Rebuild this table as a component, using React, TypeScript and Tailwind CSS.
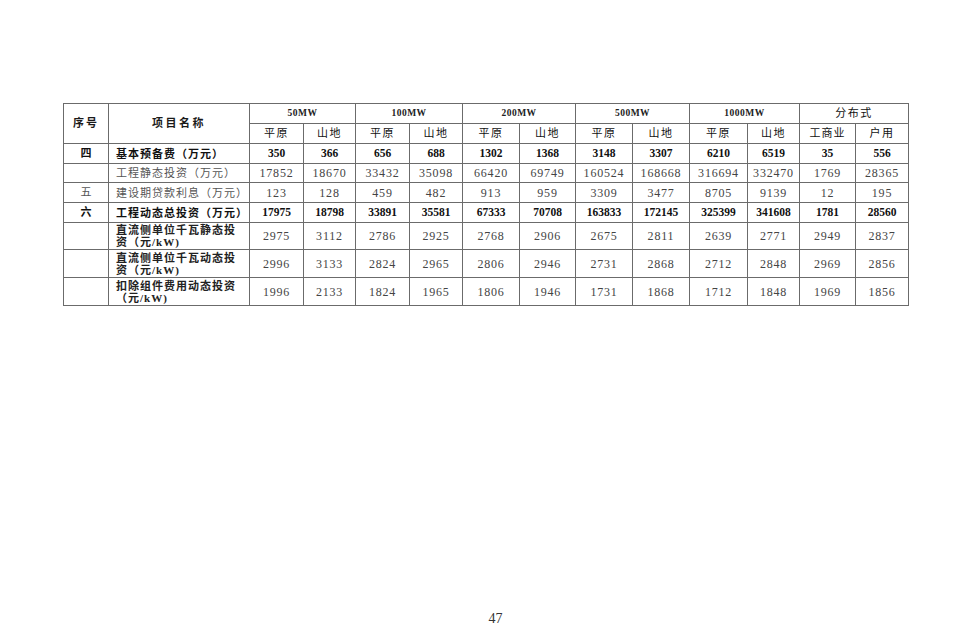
const widths = [45, 141, 54, 52, 54, 53, 57, 56, 57, 57, 58, 52, 56, 53];

type Row = {
  no: string;
  name: string[];
  values: number[];
  bold?: boolean;
  h: number;
};

const rows: Row[] = [
  { no: "四", name: ["基本预备费（万元）"], values: [350, 366, 656, 688, 1302, 1368, 3148, 3307, 6210, 6519, 35, 556], bold: true, h: 20 },
  { no: "", name: ["工程静态投资（万元）"], values: [17852, 18670, 33432, 35098, 66420, 69749, 160524, 168668, 316694, 332470, 1769, 28365], h: 19 },
  { no: "五", name: ["建设期贷款利息（万元）"], values: [123, 128, 459, 482, 913, 959, 3309, 3477, 8705, 9139, 12, 195], h: 20 },
  { no: "六", name: ["工程动态总投资（万元）"], values: [17975, 18798, 33891, 35581, 67333, 70708, 163833, 172145, 325399, 341608, 1781, 28560], bold: true, h: 20 },
  { no: "", name: ["直流侧单位千瓦静态投", "资（元/kW)"], values: [2975, 3112, 2786, 2925, 2768, 2906, 2675, 2811, 2639, 2771, 2949, 2837], h: 27 },
  { no: "", name: ["直流侧单位千瓦动态投", "资（元/kW)"], values: [2996, 3133, 2824, 2965, 2806, 2946, 2731, 2868, 2712, 2848, 2969, 2856], h: 28 },
  { no: "", name: ["扣除组件费用动态投资", "（元/kW)"], values: [1996, 2133, 1824, 1965, 1806, 1946, 1731, 1868, 1712, 1848, 1969, 1856], h: 28 },
];

const groups = ["50MW", "100MW", "200MW", "500MW", "1000MW"];

const cell = "border border-[#6b6b6b] p-0 text-center align-middle";

export default function App() {
  return (
    <div
      className="w-[970px] h-[630px] bg-white flex flex-col pt-[103px] pl-[63px]"
      style={{ fontFamily: '"Liberation Serif", "Noto Sans CJK SC", serif' }}
    >
      <table className="table-fixed border-collapse w-[845px] text-[11px] text-[#1a1a1a]">
        <colgroup>
          {widths.map((w, i) => (
            <col key={i} style={{ width: w }} />
          ))}
        </colgroup>
        <thead>
          <tr className="h-[20px]">
            <th rowSpan={2} className={`${cell} font-bold tracking-[2px]`}>
              序号
            </th>
            <th rowSpan={2} className={`${cell} font-bold tracking-[2.5px]`}>
              项目名称
            </th>
            {groups.map((g) => (
              <th key={g} colSpan={2} className={`${cell} font-semibold text-[#222] text-[9.5px] tracking-[0.5px]`}>
                {g}
              </th>
            ))}
            <th colSpan={2} className={`${cell} font-normal text-[#111] tracking-[1.5px]`}>
              分布式
            </th>
          </tr>
          <tr className="h-[20px]">
            {groups.map((g) => (
              <>
                <th key={g + "a"} className={`${cell} font-normal text-[#111] tracking-[1.5px]`}>
                  平原
                </th>
                <th key={g + "b"} className={`${cell} font-normal text-[#111] tracking-[1.5px]`}>
                  山地
                </th>
              </>
            ))}
            <th className={`${cell} font-normal text-[#111] tracking-[1px]`}>工商业</th>
            <th className={`${cell} font-normal text-[#111] tracking-[1.5px]`}>户用</th>
          </tr>
        </thead>
        <tbody>
          {rows.map((r, i) => (
            <tr key={i} style={{ height: r.h }}>
              <td className={`${cell} ${r.bold ? "font-bold text-[#111]" : "text-[#555]"}`}>{r.no}</td>
              <td
                className={`border border-[#6b6b6b] py-0 pl-[7px] pr-0 text-left align-middle leading-[12px] tracking-[1px] ${
                  r.bold ? "font-bold text-[#111]" : r.name.length > 1 ? "font-bold text-[#222]" : "text-[#555]"
                }`}
              >
                {r.name.map((n, j) => (
                  <div key={j}>{n}</div>
                ))}
              </td>
              {r.values.map((v, j) => (
                <td
                  key={j}
                  className={`${cell} ${
                    r.bold ? "font-bold text-[#111] text-[11.5px]" : "text-[#444] text-[12px] tracking-[0.8px]"
                  }`}
                >
                  {v}
                </td>
              ))}
            </tr>
          ))}
        </tbody>
      </table>
      <div className="mt-auto mb-[1px] w-[865px] text-center text-[14px] text-[#333]">47</div>
    </div>
  );
}
